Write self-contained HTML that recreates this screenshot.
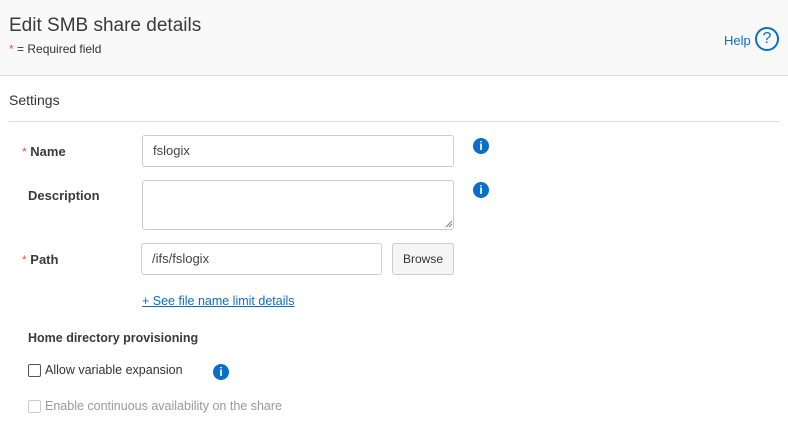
<!DOCTYPE html>
<html><head><style>
*{box-sizing:border-box;margin:0;padding:0}
body{width:788px;height:426px;overflow:hidden;background:#fff;font-family:"Liberation Sans",sans-serif;color:#333;position:relative}
.a{position:absolute;white-space:nowrap}
.hdr{position:absolute;left:0;top:0;width:788px;height:76px;background:#f9f9f9;border-bottom:1px solid #ddd}
.lbl{font-size:13px;font-weight:bold;color:#3a3a3a}
.star{color:#e0603a;font-weight:normal;font-size:12px}
.inp{position:absolute;border:1px solid #ccc;border-radius:3px;background:#fff;font-size:13px;color:#444;padding-left:10px;line-height:29px}
.info{position:absolute;width:16px;height:16px;border-radius:50%;background:#0a6fc9;color:#fff;font-size:12px;font-weight:bold;text-align:center;line-height:16px;font-family:"Liberation Sans",sans-serif}
.cb{position:absolute;width:13px;height:13px;border:1px solid #555;border-radius:2px;background:#fff}
</style></head><body>
<div class="hdr"></div>
<div class="a" style="left:9px;top:15px;font-size:19px;color:#3a3a3a">Edit SMB share details</div>
<div class="a" style="left:9px;top:42px;font-size:12px;color:#333"><span style="color:#e0603a">*</span> = Required field</div>
<div class="a" style="left:724px;top:33px;font-size:13px;color:#0a6fc9">Help</div>
<div class="a" style="left:755px;top:27px;width:24px;height:24px;border:2px solid #0a6fc9;border-radius:50%;color:#0a6fc9;font-size:16px;text-align:center;line-height:20px">?</div>
<div class="a" style="left:9px;top:92px;font-size:14px;color:#333">Settings</div>
<div class="a" style="left:9px;top:121px;width:771px;height:1px;background:#ddd"></div>

<div class="a lbl" style="left:22px;top:144px"><span class="star">*</span> Name</div>
<div class="inp" style="left:142px;top:135px;width:312px;height:32px">fslogix</div>
<div class="info" style="left:473px;top:138px">i</div>

<div class="a lbl" style="left:28px;top:188px">Description</div>
<div class="inp" style="left:142px;top:180px;width:312px;height:50px"></div>
<svg class="a" style="left:445px;top:220px" width="8" height="8"><path d="M1 7L7 1M4 7L7 4" stroke="#777" stroke-width="1"/></svg>
<div class="info" style="left:473px;top:182px">i</div>

<div class="a lbl" style="left:22px;top:252px"><span class="star">*</span> Path</div>
<div class="inp" style="left:141px;top:243px;width:241px;height:32px">/ifs/fslogix</div>
<div class="a" style="left:392px;top:243px;width:62px;height:32px;border:1px solid #ccc;border-radius:3px;background:#f5f5f5;font-size:12px;text-align:center;line-height:30px;color:#333">Browse</div>

<div class="a" style="left:142px;top:294px;font-size:12.5px;color:#0a6fc9;text-decoration:underline">+ See file name limit details</div>
<div class="a lbl" style="left:28px;top:331px;font-size:12.5px">Home directory provisioning</div>
<div class="cb" style="left:28px;top:364px"></div>
<div class="a" style="left:45px;top:363px;font-size:12.5px;color:#333">Allow variable expansion</div>
<div class="info" style="left:213px;top:364px">i</div>
<div class="cb" style="left:28px;top:400px;border-color:#ccc"></div>
<div class="a" style="left:45px;top:399px;font-size:12.5px;color:#999">Enable continuous availability on the share</div>
</body></html>
